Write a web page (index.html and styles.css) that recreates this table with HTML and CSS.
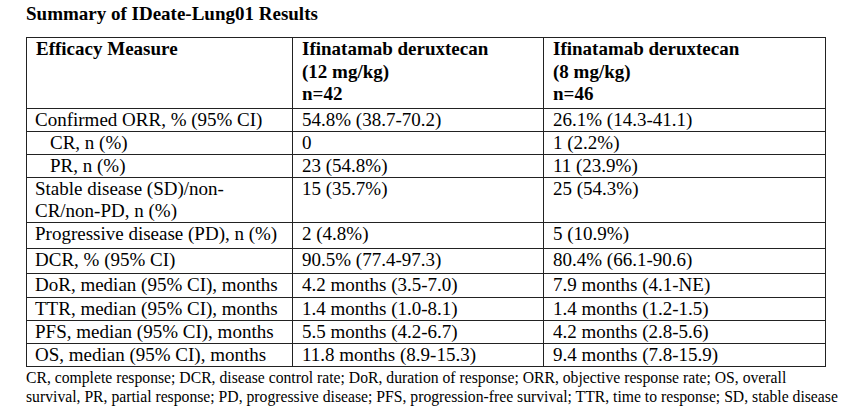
FILE: index.html
```html
<!DOCTYPE html>
<html lang="en">
<head>
<meta charset="utf-8">
<title>Summary of IDeate-Lung01 Results</title>
<link rel="stylesheet" href="styles.css">
</head>
<body>
<div class="page">
  <h1 class="title">Summary of IDeate-Lung01 Results</h1>
  <table class="results">
    <colgroup>
      <col class="c1"><col class="c2"><col class="c3">
    </colgroup>
    <thead>
      <tr class="r-head">
        <th>Efficacy Measure</th>
        <th>Ifinatamab deruxtecan<br>(12 mg/kg)<br>n=42</th>
        <th>Ifinatamab deruxtecan<br>(8 mg/kg)<br>n=46</th>
      </tr>
    </thead>
    <tbody>
      <tr class="r23"><td>Confirmed ORR, % (95% CI)</td><td>54.8% (38.7-70.2)</td><td>26.1% (14.3-41.1)</td></tr>
      <tr class="r23"><td class="sub">CR, n (%)</td><td>0</td><td>1 (2.2%)</td></tr>
      <tr class="r23"><td class="sub">PR, n (%)</td><td>23 (54.8%)</td><td>11 (23.9%)</td></tr>
      <tr class="r45"><td>Stable disease (SD)/non-<br>CR/non-PD, n (%)</td><td>15 (35.7%)</td><td>25 (54.3%)</td></tr>
      <tr class="r26"><td>Progressive disease (PD), n (%)</td><td>2 (4.8%)</td><td>5 (10.9%)</td></tr>
      <tr class="r25"><td>DCR, % (95% CI)</td><td>90.5% (77.4-97.3)</td><td>80.4% (66.1-90.6)</td></tr>
      <tr class="r24"><td>DoR, median (95% CI), months</td><td>4.2 months (3.5-7.0)</td><td>7.9 months (4.1-NE)</td></tr>
      <tr class="r23"><td>TTR, median (95% CI), months</td><td>1.4 months (1.0-8.1)</td><td>1.4 months (1.2-1.5)</td></tr>
      <tr class="r23"><td>PFS, median (95% CI), months</td><td>5.5 months (4.2-6.7)</td><td>4.2 months (2.8-5.6)</td></tr>
      <tr class="r23"><td>OS, median (95% CI), months</td><td>11.8 months (8.9-15.3)</td><td>9.4 months (7.8-15.9)</td></tr>
    </tbody>
  </table>
  <p class="note">CR, complete response; DCR, disease control rate; DoR, duration of response; ORR, objective response rate; OS, overall<br>survival, PR, partial response; PD, progressive disease; PFS, progression-free survival; TTR, time to response; SD, stable disease</p>
</div>
</body>
</html>
```

FILE: styles.css
```css
html, body {
  margin: 0;
  padding: 0;
  background: #ffffff;
}

body {
  font-family: "Liberation Serif", "Times New Roman", serif;
  color: #000000;
}

.page {
  padding: 0 0 0 26px;
}

.title {
  margin: 0;
  padding-top: 3px;
  font-size: 19px;
  font-weight: bold;
  line-height: 22px;
  height: 34px;
}

.results {
  border-collapse: collapse;
  font-size: 19px;
  line-height: 22px;
}

.c1 { width: 266px; }
.c2 { width: 251px; }
.c3 { width: 282px; }

.results th,
.results td {
  border: 1px solid #222222;
  padding: 0 4px 0 8px;
  text-align: left;
  vertical-align: top;
  box-sizing: border-box;
}

.results th {
  font-weight: bold;
  padding-left: 9px;
  line-height: 22.5px;
}

.results td + td {
  padding-left: 9px;
}

.results td.sub {
  padding-left: 23px;
}

.r-head th { height: 71px; }
.r23 td { height: 23px; }
.r24 td { height: 24px; }
.r25 td { height: 25px; }
.r26 td { height: 26px; }
.r45 td { height: 45px; }

.note {
  margin: 1px 0 0 0;
  font-size: 15.7px;
  line-height: 19px;
}
```
